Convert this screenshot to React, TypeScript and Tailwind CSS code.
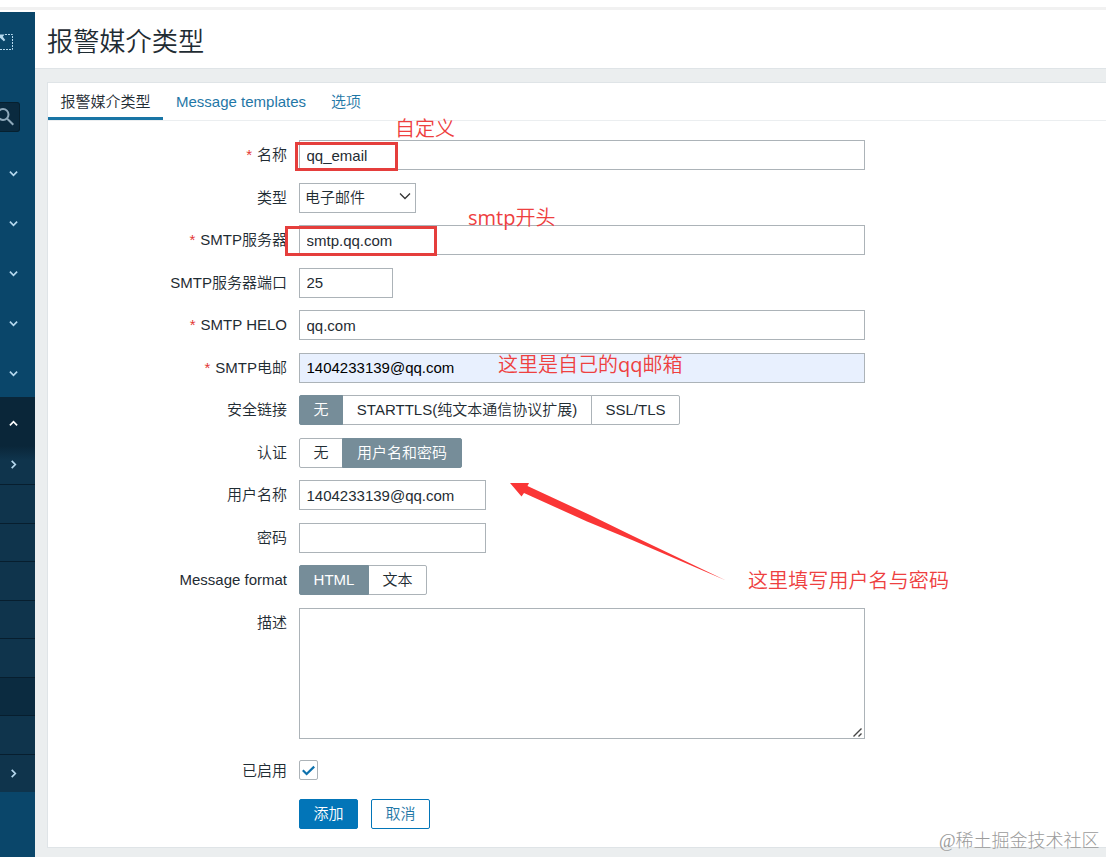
import React from "react";
import clsx from "clsx";

const SUB_ITEMS = [
  { arrow: true },
  {},
  {},
  {},
  {},
  {},
  { active: true },
  {},
  { arrow: true },
] as { arrow?: boolean; active?: boolean }[];

function Chevron({ className }: { className?: string }) {
  return (
    <svg viewBox="0 0 8 8" className={clsx("w-[9px] h-[9px]", className)} fill="none" stroke="currentColor" strokeWidth="1.5">
      <path d="M0.8 2.4 L4 5.6 L7.2 2.4" />
    </svg>
  );
}

function Sidebar() {
  return (
    <aside className="w-[35px] shrink-0 bg-[#0a466a] text-[#b5d8ee] overflow-hidden">
      <div className="h-[90px] pt-[21px]">
        <svg width="14" height="18" viewBox="0 0 14 18" fill="none" stroke="currentColor">
          <path d="M5 1.5 H12.5 V16.5 H0" strokeDasharray="2 1" />
          <path d="M0 1.5 H4.5 L2.8 3.8 L5.3 7 L3.8 8.3 L0 4.8 Z" fill="currentColor" stroke="none" />
        </svg>
      </div>
      <div className="w-5 h-[30px] rounded-r-[3px] border border-l-0 border-[#06202f] bg-[#0a2a3f] flex items-center">
        <svg width="15" height="20" viewBox="0 0 15 20" fill="none" stroke="#8fa9bb" strokeWidth="2">
          <circle cx="3" cy="7.5" r="5.5" />
          <path d="M7 11.5 L13.3 17.8" />
        </svg>
      </div>
      <nav className="pt-[15px]">
        {[0, 1, 2, 3, 4].map((i) => (
          <div key={i} className="h-[50px] pl-[9px] pt-[2px] flex items-center">
            <Chevron />
          </div>
        ))}
        <div className="h-[48.5px] pl-[9px] pt-1 flex items-center bg-[#0a2639] text-white">
          <Chevron className="rotate-180" />
        </div>
        <div className="bg-[linear-gradient(to_bottom,#0a2639,#0f344c_14px)]">
          {SUB_ITEMS.map((item, i) => (
            <div
              key={i}
              className={clsx(
                "h-[38.5px] pl-[9px] flex items-center",
                i > 0 && "border-t border-[#071e2e]",
                item.active && "bg-[#0b2b40]",
                i > 0 && !item.active && "bg-[#0f344c]"
              )}
            >
              {item.arrow && <Chevron className="-rotate-90" />}
            </div>
          ))}
        </div>
      </nav>
    </aside>
  );
}

type RowProps = {
  label?: string;
  required?: boolean;
  children: React.ReactNode;
};

function Row({ label, required, children }: RowProps) {
  return (
    <div className="flex gap-3">
      <div className="w-[239px] shrink-0 h-[30px] leading-[29px] text-right whitespace-nowrap">
        {required && <span className="text-[#e33734] mr-[5px]">*</span>}
        {label}
      </div>
      {children}
    </div>
  );
}

function Field({ value, className }: { value?: string; className?: string }) {
  return (
    <input
      readOnly
      value={value ?? ""}
      className={clsx("h-[30px] border border-[#acb3b8] px-[6.5px] outline-none rounded-none", className)}
    />
  );
}

function Segmented({ options, selected }: { options: [string, string][]; selected: number }) {
  return (
    <div className="flex h-[30px]">
      {options.map(([text, width], i) => (
        <button
          key={text}
          className={clsx(
            "h-[30px] border text-center whitespace-nowrap leading-[28px]",
            width,
            i > 0 && "-ml-px",
            i === 0 && "rounded-l-[2px]",
            i === options.length - 1 && "rounded-r-[2px]",
            i === selected ? "relative bg-[#768d99] border-[#768d99] text-white" : "bg-white border-[#acb3b8]"
          )}
        >
          {text}
        </button>
      ))}
    </div>
  );
}

function Annotations() {
  return (
    <div className="absolute inset-0 pointer-events-none text-[20px] leading-[24px] text-[#ee4040] whitespace-nowrap font-[350] font-['Open_Sans','Noto_Sans_CJK_SC',sans-serif]">
      <div className="absolute left-[295px] top-[142px] w-[103px] h-[29px] border-[3px] border-[#e53e3c]" />
      <div className="absolute left-[285px] top-[226px] w-[152px] h-[30px] border-[3px] border-[#e53e3c]" />
      <span className="absolute left-[395px] top-[117px]">自定义</span>
      <span className="absolute left-[468px] top-[206px]">
        <b className="font-medium">smtp</b>开头
      </span>
      <span className="absolute left-[498px] top-[353px]">
        这里是自己的<b className="font-medium">qq</b>邮箱
      </span>
      <span className="absolute left-[748px] top-[569px] tracking-[0.1px]">这里填写用户名与密码</span>
      <svg className="absolute left-[505px] top-[478px]" width="225" height="106" viewBox="505 478 225 106">
        <path d="M510 483 L529 483 L527.5 486 L590 515 L633 536 L726 580.5 L632 540 L587 521.5 L524 493 L521.5 496.5 Z" fill="#fa3636" />
      </svg>
      <span className="absolute left-[939px] top-[829px] text-[18px] font-light text-[#9b9b9b] font-['Liberation_Serif','Noto_Sans_CJK_SC',serif]">
        @稀土掘金技术社区
      </span>
    </div>
  );
}

export default function App() {
  return (
    <div className="relative w-[1106px] h-[857px] overflow-hidden bg-white text-[15px] text-[#1f2c33] font-[350] font-['Liberation_Sans','Noto_Sans_CJK_SC',sans-serif]">
      <div className="h-3 pt-[7px]">
        <div className="h-[3px] bg-[#f1f1f1]" />
      </div>
      <div className="flex h-[845px]">
        <Sidebar />
        <div className="flex-1 bg-[#ebeeef]">
          <header className="h-[57px] bg-white border-b border-[#dfe4e7] pl-3">
            <h1 className="text-[26.2px] leading-[60px] font-[350]">报警媒介类型</h1>
          </header>
          <main className="ml-[13px] mt-[14px] h-[764px] bg-white shadow-[0_0_0_1px_#dfe4e7]">
            <div className="flex h-[38px] border-b border-[#ebeef0] leading-[37px] text-[#1f77a6]">
              <div className="w-[115px] h-[37px] text-center text-[#1f2c33] border-b-[3px] border-[#1875a5]">报警媒介类型</div>
              <div className="ml-[13px] w-[130px] whitespace-nowrap">Message templates</div>
              <div className="ml-[25px]">选项</div>
            </div>

            <form className="pt-[19px] flex flex-col gap-[12.5px]">
              <Row label="名称" required>
                <Field value="qq_email" className="w-[566px]" />
              </Row>
              <Row label="类型">
                <div className="w-[117px] h-[30px] border border-[#acb3b8] pl-[5px] pr-1 flex items-center justify-between">
                  <span className="pt-[2px]">电子邮件</span>
                  <svg width="12" height="8" viewBox="0 0 12 8" className="-mt-1" fill="none" stroke="#333" strokeWidth="1.3">
                    <path d="M1 1.5 L6 6.5 L11 1.5" />
                  </svg>
                </div>
              </Row>
              <Row label="SMTP服务器" required>
                <Field value="smtp.qq.com" className="w-[566px]" />
              </Row>
              <Row label="SMTP服务器端口">
                <Field value="25" className="w-[94px]" />
              </Row>
              <Row label="SMTP HELO" required>
                <Field value="qq.com" className="w-[566px]" />
              </Row>
              <Row label="SMTP电邮" required>
                <Field value="1404233139@qq.com" className="w-[566px] bg-[#e8f0fe] text-black" />
              </Row>
              <Row label="安全链接">
                <Segmented
                  selected={0}
                  options={[
                    ["无", "w-[44px]"],
                    ["STARTTLS(纯文本通信协议扩展)", "w-[250px]"],
                    ["SSL/TLS", "w-[89px]"],
                  ]}
                />
              </Row>
              <Row label="认证">
                <Segmented
                  selected={1}
                  options={[
                    ["无", "w-[44px]"],
                    ["用户名和密码", "w-[120px]"],
                  ]}
                />
              </Row>
              <Row label="用户名称">
                <Field value="1404233139@qq.com" className="w-[187px]" />
              </Row>
              <Row label="密码">
                <Field className="w-[187px]" />
              </Row>
              <Row label="Message format">
                <Segmented
                  selected={0}
                  options={[
                    ["HTML", "w-[70px]"],
                    ["文本", "w-[59px]"],
                  ]}
                />
              </Row>
              <Row label="描述">
                <div className="w-[566px] h-[131px] border border-[#acb3b8] flex items-end justify-end p-[2px] pb-px">
                  <svg width="9" height="9" viewBox="0 0 9 9" stroke="#444" strokeWidth="1.4">
                    <path d="M0.5 8.5 L8.5 0.5 M5.5 8.5 L8.5 5.5" />
                  </svg>
                </div>
              </Row>
              <div className="mt-[5px]">
                <Row label="已启用">
                  <div className="w-[19px] h-5 mt-1 border border-[#acb3b8] rounded-[2px] flex items-center justify-center">
                    <svg width="13" height="11" viewBox="0 0 13 11" fill="none" stroke="#0e72ae" strokeWidth="2.2">
                      <path d="M0.8 5.2 L4.6 9 L12.2 1.6" />
                    </svg>
                  </div>
                </Row>
              </div>
              <Row>
                <div className="flex gap-[13px]">
                  <button className="w-[59px] h-[30px] pt-[2px] rounded-[2px] border border-[#0275b8] bg-[#0275b8] text-white">添加</button>
                  <button className="w-[59px] h-[30px] pt-[2px] rounded-[2px] border border-[#0275b8] text-[#1f77a6]">取消</button>
                </div>
              </Row>
            </form>
          </main>
        </div>
      </div>
      <Annotations />
    </div>
  );
}
